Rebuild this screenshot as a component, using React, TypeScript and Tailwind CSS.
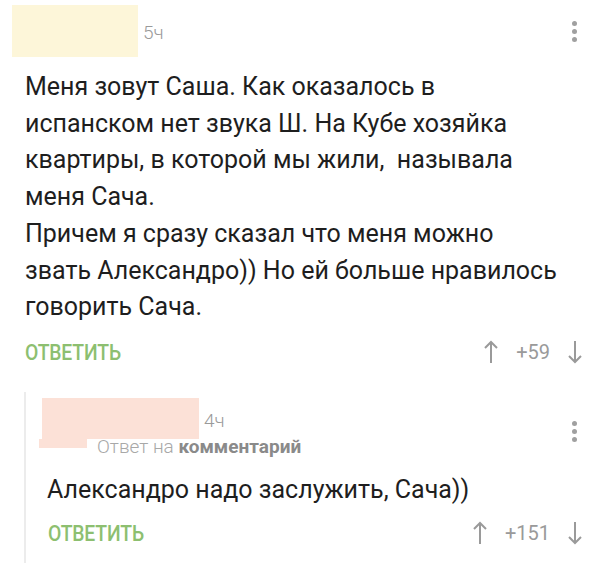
import React from 'react';

const Dots = () => (
  <div className="flex flex-col gap-[3px] items-center w-[6px]">
    <span className="w-[5px] h-[5px] rounded-full bg-[#a0a0a0]" />
    <span className="w-[5px] h-[5px] rounded-full bg-[#a0a0a0]" />
    <span className="w-[5px] h-[5px] rounded-full bg-[#a0a0a0]" />
  </div>
);

const ArrowUp = () => (
  <svg width="14" height="24" viewBox="0 0 14 24" fill="none" stroke="#9a9a9a" strokeWidth="2">
    <path d="M7 23V2" />
    <path d="M1 8l6-6 6 6" />
  </svg>
);

const ArrowDown = () => (
  <svg width="14" height="24" viewBox="0 0 14 24" fill="none" stroke="#9a9a9a" strokeWidth="2">
    <path d="M7 1v21" />
    <path d="M1 16l6 6 6-6" />
  </svg>
);

const Actions = ({ score }: { score: string }) => (
  <div className="flex items-center justify-between h-[30px]">
    <span className="inline-block origin-left scale-x-[0.86] text-[22.5px] leading-none font-medium text-[#8dbf70] tracking-[-0.2px]">
      ОТВЕТИТЬ
    </span>
    <div className="flex items-center gap-[18px] text-[#9a9a9a] text-[20px] leading-none">
      <ArrowUp />
      <span>{score}</span>
      <ArrowDown />
    </div>
  </div>
);

export default function App() {
  return (
    <div className="w-[604px] h-[563px] bg-white overflow-hidden font-['Roboto','Noto_Sans',sans-serif] text-[#1e1e1e]">
      {/* first comment */}
      <div className="flex items-start pl-[12px] pr-[27px] pt-[5px]">
        <div className="w-[126px] h-[52px] bg-[#fdf6d9]" />
        <span className="ml-[5px] mt-[18px] text-[19px] leading-none font-light text-[#9a9a9a]">5ч</span>
        <div className="flex-1" />
        <div className="mt-[16px]">
          <Dots />
        </div>
      </div>

      <div className="pl-[25px] pr-[22px]">
        <p className="mt-[12px] text-[25px] leading-[36.7px]">
          Меня зовут Саша. Как оказалось в<br />
          испанском нет звука Ш. На Кубе хозяйка<br />
          квартиры, в которой мы жили,&nbsp; называла<br />
          меня Сача.<br />
          Причем я сразу сказал что меня можно<br />
          звать Александро)) Но ей больше нравилось<br />
          говорить Сача.
        </p>
        <div className="mt-[11px]">
          <Actions score="+59" />
        </div>
      </div>

      {/* reply */}
      <div className="mt-[25px] ml-[24px] mr-[22px] border-l-2 border-[#ececec] pl-[16px] pt-[6px] h-[200px]">
        <div className="flex items-start">
          <div className="flex flex-col">
            <div className="flex items-end">
              <div className="w-[157px] h-[41px] bg-[#fce1d7]" />
              <span className="ml-[5px] mb-[9px] text-[19px] leading-none font-light text-[#9a9a9a]">4ч</span>
            </div>
            <div className="flex items-start">
              <div className="w-[48px] h-[9px] -ml-[3px] bg-[#fce1d7]" />
              <span className="ml-[10px] text-[19px] leading-[16px] font-light text-[#a8a8a8]">
                Ответ на <b className="font-bold text-[#8a8a8a]">комментарий</b>
              </span>
            </div>
          </div>
          <div className="flex-1" />
          <div className="mt-[23px] mr-[5px]">
            <Dots />
          </div>
        </div>

        <p className="mt-[16px] pl-[5px] text-[25px] leading-[37px]">Александро надо заслужить, Сача))</p>
        <div className="mt-[10px] pl-[6px]">
          <Actions score="+151" />
        </div>
      </div>
    </div>
  );
}
